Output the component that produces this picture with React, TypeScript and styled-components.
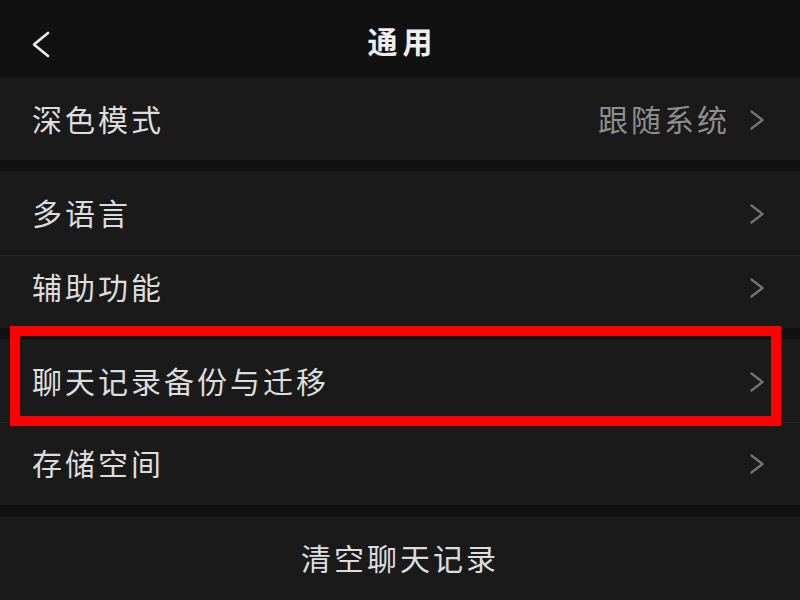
import styled, { createGlobalStyle } from "styled-components";

const GlobalStyle = createGlobalStyle`
  html, body {
    margin: 0;
    padding: 0;
    background: #111111;
  }
  body {
    font-family: "Noto Sans CJK SC", "Noto Sans", sans-serif;
  }
`;

const Page = styled.div`
  width: 800px;
  height: 600px;
  overflow: hidden;
  display: flex;
  flex-direction: column;
  background: #111111;
`;

const Header = styled.div`
  height: 78px;
  flex-shrink: 0;
  display: flex;
  align-items: center;
  justify-content: center;
  position: relative;
  background: #111111;
`;

const BackButton = styled.div`
  position: absolute;
  left: 31px;
  top: 31px;
  width: 20px;
  height: 27px;
  display: flex;
`;

const Title = styled.h1`
  margin: 2px -5px 0 0;
  font-size: 30px;
  line-height: 1;
  font-weight: 700;
  letter-spacing: 5px;
  color: #eeeeee;
`;

const Group = styled.div<{ gap?: boolean }>`
  margin-top: ${(p) => (p.gap ? "12px" : "0")};
  border-top: 1px solid #202020;
  background: #1a1a1a;
  display: flex;
  flex-direction: column;
`;

const Row = styled.div<{ h: number; divider?: boolean; center?: boolean; lift?: number }>`
  height: ${(p) => p.h}px;
  box-sizing: border-box;
  display: flex;
  align-items: center;
  justify-content: ${(p) => (p.center ? "center" : "space-between")};
  padding: 0 35px ${(p) => p.lift ?? 0}px 32px;
  border-bottom: ${(p) => (p.divider ? "1px solid #262626" : "none")};
  position: relative;
`;

const Label = styled.span`
  font-size: 30px;
  line-height: 1;
  letter-spacing: 3px;
  margin-top: -4px;
  color: #dddddd;
`;

const CenterLabel = styled(Label)`
  margin-right: -3px;
`;

const Trail = styled.div`
  display: flex;
  align-items: center;
  gap: 22px;
`;

const Value = styled.span`
  font-size: 30px;
  line-height: 1;
  letter-spacing: 3px;
  margin: -4px -3px 0 0;
  color: #8e8e8e;
`;

const Highlight = styled.div`
  position: absolute;
  left: 10px;
  right: 19px;
  top: -15px;
  bottom: -4px;
  border: 10px solid #ff0000;
  pointer-events: none;
`;

const Chevron = () => (
  <svg width="16" height="22" viewBox="0 0 16 22">
    <path d="M2.5 2.5 L13.5 11 L2.5 19.5" fill="none" stroke="#727272" strokeWidth="2.4" strokeLinecap="round" strokeLinejoin="round" />
  </svg>
);

const BackArrow = () => (
  <svg width="20" height="27" viewBox="0 0 20 27">
    <path d="M17 2 L3 13.5 L17 25" fill="none" stroke="#eeeeee" strokeWidth="2.6" strokeLinecap="round" strokeLinejoin="round" />
  </svg>
);

function App() {
  return (
    <>
      <GlobalStyle />
      <Page>
        <Header>
          <BackButton>
            <BackArrow />
          </BackButton>
          <Title>通用</Title>
        </Header>

        <Group>
          <Row h={81}>
            <Label>深色模式</Label>
            <Trail>
              <Value>跟随系统</Value>
              <Chevron />
            </Trail>
          </Row>
        </Group>

        <Group gap>
          <Row h={83} divider>
            <Label>多语言</Label>
            <Chevron />
          </Row>
          <Row h={72} lift={8}>
            <Label>辅助功能</Label>
            <Chevron />
          </Row>
        </Group>

        <Group gap>
          <Row h={82} divider>
            <Label>聊天记录备份与迁移</Label>
            <Chevron />
            <Highlight />
          </Row>
          <Row h={82}>
            <Label>存储空间</Label>
            <Chevron />
          </Row>
        </Group>

        <Group gap>
          <Row h={82} center>
            <CenterLabel>清空聊天记录</CenterLabel>
          </Row>
        </Group>
      </Page>
    </>
  );
}

export default App;
